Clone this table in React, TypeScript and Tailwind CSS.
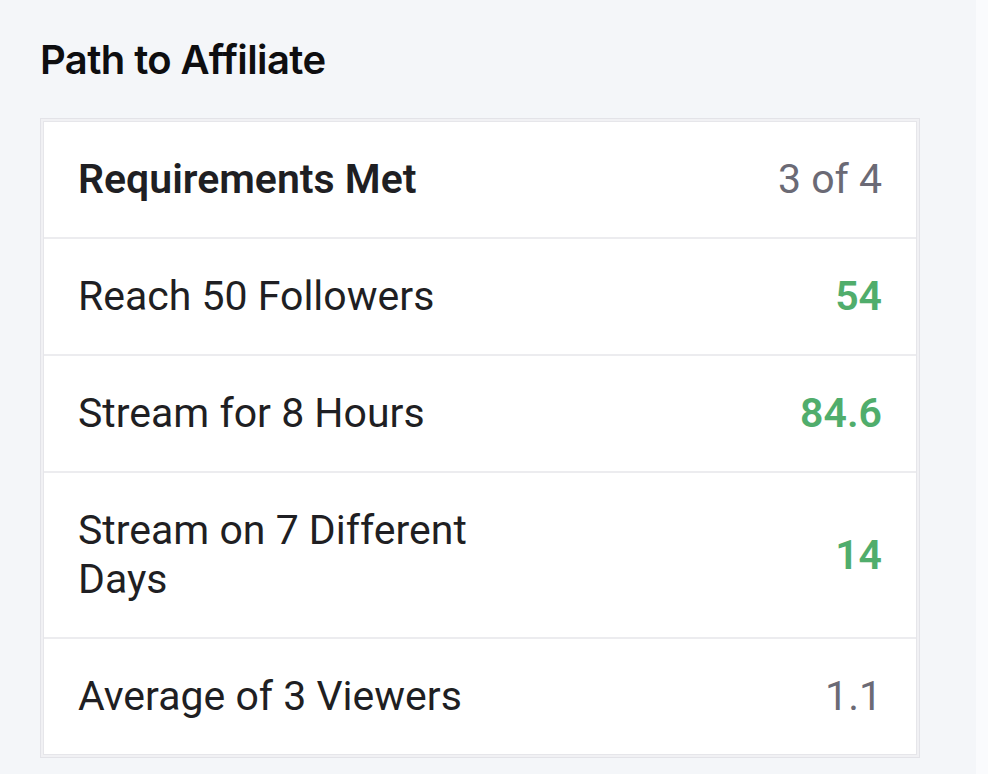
const ROWS = [
  { label: 'Reach 50 Followers', value: '54', met: true },
  { label: 'Stream for 8 Hours', value: '84.6', met: true },
  { label: 'Stream on 7 Different Days', value: '14', met: true },
  { label: 'Average of 3 Viewers', value: '1.1', met: false },
]

export default function App() {
  return (
    <div className="flex h-[774px] w-[988px] overflow-hidden bg-[#fafbfd] font-['Roboto',sans-serif]">
      <div className="w-[976px] bg-[#f4f6f9] pl-[40px] pt-[36px]">
        <h2 className="font-['Inter',sans-serif] text-[40px] font-semibold leading-[48px] tracking-[-0.6px] text-[#0e0e10]">
          Path to Affiliate
        </h2>

        <div className="mt-[34px] w-[880px] border border-[#e3e3e8] bg-[#f1f1f4] p-[2px]">
          <div className="border border-[#e6e6ea] bg-white">
            {/* Header */}
            <div className="flex items-center justify-between border-b-2 border-[#ececef] py-[33px] pl-[34px] pr-[34px]">
              <span className="text-[41px] font-semibold leading-[49px] text-[#1f1f23]">Requirements Met</span>
              <span className="text-[41px] leading-[49px] text-[#6b6a75]">3 of 4</span>
            </div>

            {ROWS.map((row, i) => (
              <div
                key={row.label}
                className={`flex items-center justify-between py-[33px] pl-[34px] pr-[34px] ${i < ROWS.length - 1 ? 'border-b-2 border-[#ececef]' : ''}`}
              >
                <span className="max-w-[440px] text-[41px] leading-[49px] text-[#1f1f23]">{row.label}</span>
                <span
                  className={
                    row.met
                      ? 'text-[41px] font-semibold leading-[49px] text-[#50ad6c]'
                      : 'text-[41px] leading-[49px] text-[#6b6a75]'
                  }
                >
                  {row.value}
                </span>
              </div>
            ))}
          </div>
        </div>
      </div>
      <div className="flex-1" />
    </div>
  )
}
